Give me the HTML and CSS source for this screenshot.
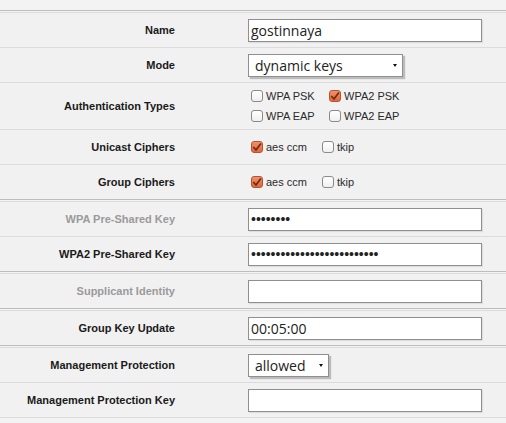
FILE: index.html
```html
<!DOCTYPE html>
<html>
<head>
<meta charset="utf-8">
<link rel="stylesheet" href="styles.css">
</head>
<body>
<div class="page">
  <div class="top"></div>
  <div class="section">
    <div class="row">
      <div class="label">Name</div>
      <div class="ctrl"><input class="text" type="text" value="gostinnaya"></div>
    </div>
    <div class="row">
      <div class="label">Mode</div>
      <div class="ctrl"><span class="select wide"><span class="sel-text">dynamic keys</span><span class="arrow"></span></span></div>
    </div>
    <div class="row tall">
      <div class="label">Authentication Types</div>
      <div class="ctrl">
        <div class="auth-grid">
          <label class="cb"><span class="box"></span>WPA PSK</label>
          <label class="cb"><span class="box on"><svg viewBox="0 0 12 12" width="12" height="12"><path d="M2.3 6 L5 9 L9.9 2.4" fill="none" stroke="#6e2a12" stroke-width="1.7"/></svg></span>WPA2 PSK</label>
          <label class="cb"><span class="box"></span>WPA EAP</label>
          <label class="cb"><span class="box"></span>WPA2 EAP</label>
        </div>
      </div>
    </div>
    <div class="row">
      <div class="label">Unicast Ciphers</div>
      <div class="ctrl">
        <div class="cb-line">
          <label class="cb"><span class="box on"><svg viewBox="0 0 12 12" width="12" height="12"><path d="M2.3 6 L5 9 L9.9 2.4" fill="none" stroke="#6e2a12" stroke-width="1.7"/></svg></span>aes ccm</label>
          <label class="cb"><span class="box"></span>tkip</label>
        </div>
      </div>
    </div>
    <div class="row">
      <div class="label">Group Ciphers</div>
      <div class="ctrl">
        <div class="cb-line">
          <label class="cb"><span class="box on"><svg viewBox="0 0 12 12" width="12" height="12"><path d="M2.3 6 L5 9 L9.9 2.4" fill="none" stroke="#6e2a12" stroke-width="1.7"/></svg></span>aes ccm</label>
          <label class="cb"><span class="box"></span>tkip</label>
        </div>
      </div>
    </div>
  </div>
  <div class="section">
    <div class="row">
      <div class="label dim">WPA Pre-Shared Key</div>
      <div class="ctrl"><input class="text pw" type="password" value="12345678"></div>
    </div>
    <div class="row">
      <div class="label">WPA2 Pre-Shared Key</div>
      <div class="ctrl"><input class="text pw" type="password" value="abcdefghijklmnopqrstuvwxyz"></div>
    </div>
  </div>
  <div class="section">
    <div class="row">
      <div class="label dim">Supplicant Identity</div>
      <div class="ctrl"><input class="text" type="text" value=""></div>
    </div>
  </div>
  <div class="section">
    <div class="row">
      <div class="label">Group Key Update</div>
      <div class="ctrl"><input class="text" type="text" value="00:05:00"></div>
    </div>
  </div>
  <div class="section">
    <div class="row">
      <div class="label">Management Protection</div>
      <div class="ctrl"><span class="select narrow"><span class="sel-text">allowed</span><span class="arrow"></span></span></div>
    </div>
    <div class="row last">
      <div class="label">Management Protection Key</div>
      <div class="ctrl"><input class="text" type="text" value=""></div>
    </div>
  </div>
</div>
</body>
</html>
```

FILE: styles.css
```css
html, body {
  margin: 0;
  padding: 0;
  background: #f3f3f3;
}
.page {
  width: 506px;
  font-family: "Liberation Sans", Arial, sans-serif;
  color: #222;
}
.top {
  height: 10px;
}
.section {
  border-top: 1px solid #bdbdbd;
  padding-top: 1px;
}
.row {
  display: flex;
  align-items: center;
  height: 35px;
  box-sizing: border-box;
  border-top: 1px solid #dcdcdc;
  background: #f1f1f1;
}
.row.tall {
  height: 47px;
}
.row.last {
  border-bottom: 1px solid #dcdcdc;
  height: 36px;
}
.label {
  width: 175px;
  flex: none;
  text-align: right;
  font-weight: bold;
  font-size: 11px;
  color: #1a1a1a;
}
.label.dim {
  color: #9a9a9a;
}
.ctrl {
  margin-left: 73px;
  display: flex;
  align-items: center;
}
.text {
  width: 234px;
  height: 23px;
  box-sizing: border-box;
  margin: 0;
  border: 1px solid #8f8f8f;
  background: #fff;
  padding: 0 2px;
  font-family: "Open Sans", "DejaVu Sans", sans-serif;
  font-size: 14px;
  color: #222;
  outline: none;
  box-shadow: 1px 1px 1px rgba(0,0,0,0.08);
}
.text.pw {
  font-family: "Liberation Sans", Arial, sans-serif;
  font-size: 14px;
}
.select {
  position: relative;
  display: inline-flex;
  align-items: center;
  height: 23px;
  box-sizing: border-box;
  border: 1px solid #8f8f8f;
  background: #fff;
  box-shadow: 2px 2px 1px rgba(0,0,0,0.22);
  font-family: "Open Sans", "DejaVu Sans", sans-serif;
  font-size: 14px;
  color: #222;
}
.select.wide {
  width: 155px;
}
.select.narrow {
  width: 81px;
}
.sel-text {
  padding-left: 6px;
  line-height: 21px;
}
.arrow {
  position: absolute;
  right: 5px;
  top: 9px;
  width: 0;
  height: 0;
  border-left: 2px solid transparent;
  border-right: 2px solid transparent;
  border-top: 3px solid #111;
}
.auth-grid {
  display: grid;
  grid-template-columns: 78px auto;
  row-gap: 7px;
  margin-left: 3px;
}
.cb-line {
  display: flex;
  gap: 15px;
  margin-left: 3px;
}
.cb {
  display: inline-flex;
  align-items: center;
  font-size: 11px;
  color: #2a2a2a;
  line-height: 13px;
}
.box {
  width: 12px;
  height: 12px;
  box-sizing: border-box;
  border: 1px solid #8a8a8a;
  border-radius: 3px;
  background: linear-gradient(#ffffff, #f0f0f0);
  margin-right: 3px;
  display: inline-flex;
  align-items: center;
  justify-content: center;
  overflow: hidden;
}
.box.on {
  border-color: #b5532f;
  background: linear-gradient(#f0906a, #e0683e);
}
.box svg {
  display: block;
  flex: none;
}
```
